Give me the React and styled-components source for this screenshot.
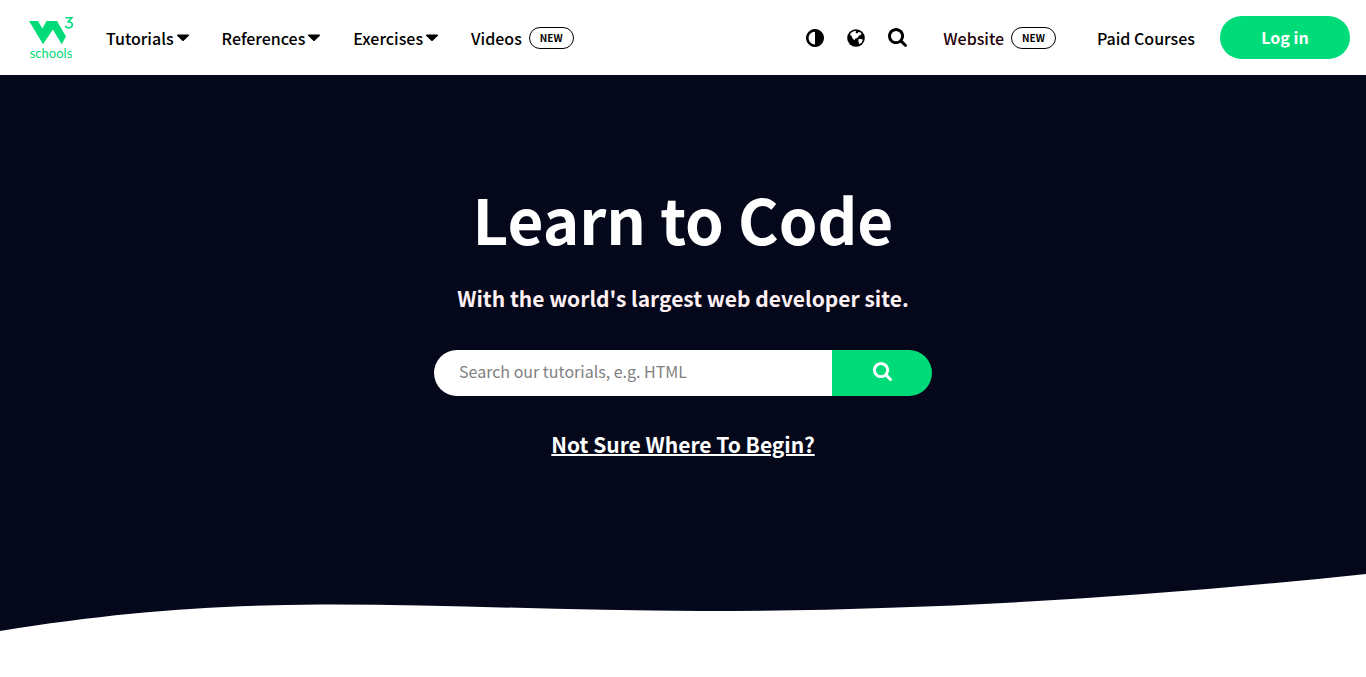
import React, { useState } from 'react'
import styled, { createGlobalStyle } from 'styled-components'

const GlobalStyle = createGlobalStyle`
	* {
		box-sizing: border-box;
	}
	body {
		margin: 0;
		background: #fff;
		color: #000;
		font-family: "Noto Sans CJK SC", "Noto Sans", sans-serif;
		font-size: 16px;
		line-height: 24px;
	}
	button, input {
		font: inherit;
	}
`

const menus = [
	{ label: 'Tutorials', dropdown: true },
	{ label: 'References', dropdown: true },
	{ label: 'Exercises', dropdown: true },
	{ label: 'Videos', badge: 'NEW' },
]

function CaretIcon() {
	return (
		<svg width="12" height="8" viewBox="0 0 12 8" fill="currentColor" aria-hidden="true">
			<path d="M.8.5h10.400c.8 0 1.100.8.6 1.300L6.700 6.700c-.4.4-1 .4-1.400 0L.2 1.800C-.3 1.300 0 .5.8.5z" />
		</svg>
	)
}

function ContrastIcon() {
	return (
		<svg width="18" height="18" viewBox="0 0 1536 1536" fill="currentColor" aria-hidden="true">
			<path d="M768 1312V224q-148 0-273 73T297 495t-73 273 73 273 198 198 273 73zm768-544q0 209-103 385.500T1153.500 1433 768 1536t-385.500-103T103 1153.500 0 768t103-385.500T382.500 103 768 0t385.500 103T1433 382.500 1536 768z" />
		</svg>
	)
}

function GlobeIcon() {
	return (
		<svg width="18" height="18" viewBox="0 0 18 18" aria-hidden="true">
			<circle cx="9" cy="9" r="8.800" fill="currentColor" />
			<path fill="#fff" d="M3.800 4 6.500 2.300 9.300 2 8.600 4 10.300 4.400 11.500 2.900 13.700 3.600 14.600 5.200 12.600 6.200 10.800 8.200 10 9.300 8.400 9.400 7.400 11.200 5.200 9 4.600 6.800 3 6z" />
			<path fill="#fff" d="M11.200 10.600 13.300 9.800 16 10.800 14.500 13.800 12.200 15.300 11.600 13z" />
		</svg>
	)
}

function SearchIcon() {
	return (
		<svg width="19" height="19" viewBox="0 0 1664 1664" fill="currentColor" aria-hidden="true">
			<path d="M1152 704q0-185-131.500-316.500T704 256 387.500 387.500 256 704t131.500 316.500T704 1152t316.500-131.500T1152 704zm512 832q0 52-38 90t-90 38q-54 0-90-38l-343-342q-179 124-399 124-143 0-273.500-55.500t-225-150-150-225T0 704t55.500-273.500 150-225 225-150T704 0t273.500 55.500 225 150 150 225T1408 704q0 220-124 399l343 343q37 37 37 90z" />
		</svg>
	)
}

function Logo() {
	return (
		<svg width="46" height="46" viewBox="0 0 46 46" fill="#00db79" aria-hidden="true">
			<path d="M1 6H10L14.400 13.500 18.500 6H29L38 21.500 33.700 29.300 24.900 14.500 15 29.300Z" />
			<path d="M37.500 2.800H43.800L40.300 6.800C43 6.800 44.300 8.200 44.300 9.800C44.300 13.200 39.500 14 37.300 11" fill="none" stroke="#00db79" strokeWidth="1.600" />
			<text x="23" y="43" textAnchor="middle" fontFamily="Lato, sans-serif" fontSize="13">schools</text>
		</svg>
	)
}

function Navbar() {
	return (
		<Header>
			<HomeLink href="#" aria-label="W3schools home">
				<Logo />
			</HomeLink>
			<Nav>
				{menus.map(menu => (
					menu.dropdown ?
						<MenuButton key={menu.label} type="button">
							{menu.label}
							<CaretIcon />
						</MenuButton>
						:
						<NavLink key={menu.label} href="#">
							{menu.label}
							<Badge>{menu.badge}</Badge>
						</NavLink>
				))}
			</Nav>
			<Tools>
				<IconButton type="button" aria-label="Change theme"><ContrastIcon /></IconButton>
				<IconButton type="button" aria-label="Translate"><GlobeIcon /></IconButton>
				<IconButton type="button" aria-label="Search"><SearchIcon /></IconButton>
			</Tools>
			<Account>
				<NavLink href="#" $tone="#1f0008">
					Website
					<Badge>NEW</Badge>
				</NavLink>
				<NavLink href="#">Paid Courses</NavLink>
			</Account>
			<LoginLink href="#">Log in</LoginLink>
		</Header>
	)
}

function Hero() {
	const [search, setSearch] = useState('')

	return (
		<HeroSection>
			<Title>Learn to Code</Title>
			<Subtitle>With the world's largest web developer site.</Subtitle>
			<SearchForm onSubmit={e => e.preventDefault()}>
				<SearchInput
					type="text"
					aria-label="Search our tutorials"
					placeholder="Search our tutorials, e.g. HTML"
					value={search}
					onChange={e => setSearch(e.target.value)} />
				<SearchButton type="submit" aria-label="Search">
					<SearchIcon />
				</SearchButton>
			</SearchForm>
			<BeginLink href="#">Not Sure Where To Begin?</BeginLink>
			<Wave viewBox="0 0 1366 58" preserveAspectRatio="none" aria-hidden="true">
				<path fill="#fff" d="M0 57C115 38 215 31 320 30.500C440 30 570 37 700 37C920 37 1140 24 1366 0V58H0Z" />
			</Wave>
		</HeroSection>
	)
}

function App() {
	return (
		<>
			<GlobalStyle />
			<Navbar />
			<main>
				<Hero />
			</main>
		</>
	)
}

export default App

const Header = styled.header`
	display: flex;
	align-items: center;
	height: 75px;
	padding: 0 16px 0 28px;
	background: #fff;
`

const HomeLink = styled.a`
	display: flex;
	margin-right: 32px;
`

const Nav = styled.nav`
	display: flex;
	align-items: center;
	gap: 33px;
	flex: 1;
`

const MenuButton = styled.button`
	display: flex;
	align-items: center;
	gap: 3px;
	padding: 0;
	border: 0;
	background: none;
	color: #000;
	font-weight: 500;
	white-space: nowrap;
	cursor: pointer;
`

const NavLink = styled.a`
	display: flex;
	align-items: center;
	gap: 7px;
	color: ${props => props.$tone || '#000'};
	font-weight: 500;
	text-decoration: none;
	white-space: nowrap;
`

const Badge = styled.span`
	padding: 0 10px;
	border: 1px solid #000;
	border-radius: 11px;
	color: #000;
	font-size: 10px;
	font-weight: 700;
	line-height: 20px;
`

const Tools = styled.div`
	display: flex;
	align-items: center;
	gap: 23px;
	margin-right: 36px;
`

const IconButton = styled.button`
	display: flex;
	padding: 0;
	border: 0;
	background: none;
	color: #000;
	cursor: pointer;
`

const Account = styled.div`
	display: flex;
	align-items: center;
	gap: 41px;
	margin-right: 25px;
`

const LoginLink = styled.a`
	width: 130px;
	border-radius: 22px;
	background: #00db79;
	color: #fff;
	font-weight: 700;
	line-height: 43px;
	text-align: center;
	text-decoration: none;
`

const HeroSection = styled.section`
	display: flex;
	flex-direction: column;
	align-items: center;
	padding-top: 95px;
	background: #05081b;
	color: #fff;
`

const Title = styled.h1`
	margin: 0;
	font-size: 62px;
	font-weight: 700;
	line-height: 96px;
`

const Subtitle = styled.p`
	margin: 16px 0 36px;
	color: #fff0f4;
	font-size: 21px;
	font-weight: 700;
	line-height: 32px;
`

const SearchForm = styled.form`
	display: flex;
	width: 498px;
	max-width: 100%;
	height: 46px;
`

const SearchInput = styled.input`
	flex: 1;
	min-width: 0;
	padding: 0 25px 4px;
	border: 0;
	border-radius: 23px 0 0 23px;
	background: #fff;
	color: #000;
	&::placeholder {
		color: #808080;
	}
`

const SearchButton = styled.button`
	display: flex;
	align-items: center;
	justify-content: center;
	width: 100px;
	padding: 0 0 4px;
	border: 0;
	border-radius: 0 23px 23px 0;
	background: #00db79;
	color: #fff;
	cursor: pointer;
`

const BeginLink = styled.a`
	margin: 32px 0 114px;
	color: #fff;
	font-size: 21px;
	font-weight: 700;
	line-height: 32px;
	text-decoration-thickness: 2px;
`

const Wave = styled.svg`
	display: block;
	width: 100%;
	height: 58px;
`
